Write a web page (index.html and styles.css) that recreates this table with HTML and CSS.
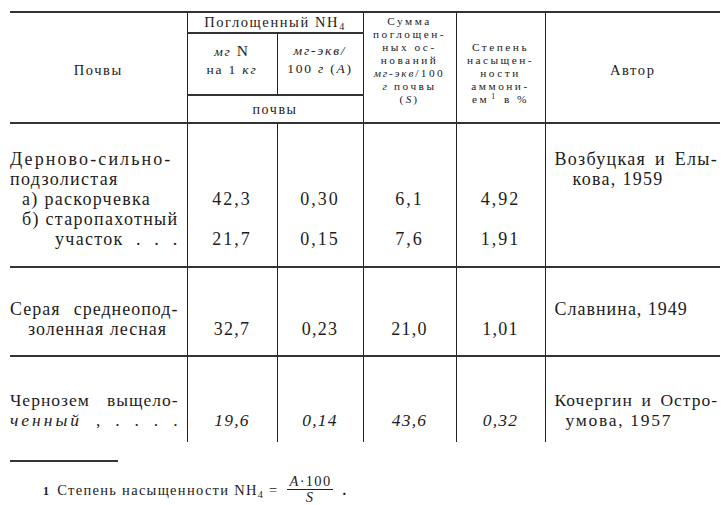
FILE: index.html
```html
<!DOCTYPE html>
<html lang="ru">
<head>
<meta charset="utf-8">
<title>Поглощенный аммоний</title>
<link rel="stylesheet" href="styles.css">
</head>
<body>
<div class="page">
  <table class="data">
    <colgroup>
      <col class="w1"><col class="w2"><col class="w3"><col class="w4"><col class="w5"><col class="w6">
    </colgroup>
    <thead>
      <tr class="h1">
        <th rowspan="3" class="first soil">Почвы</th>
        <th colspan="2" class="nh4">Поглощенный NH<sub>4</sub></th>
        <th rowspan="3" class="sum">Сумма<br>поглощен-<br>ных ос-<br>нований<br><i>мг-экв</i>/100<br><i>г</i> почвы<br>(<i>S</i>)</th>
        <th rowspan="3" class="deg">Степень<br>насыщен-<br>ности<br>аммони-<br>ем<sup>1</sup> в %</th>
        <th rowspan="3" class="author">Автор</th>
      </tr>
      <tr class="h2">
        <th class="unit"><i>мг</i> <span class="big">N</span><br>на 1 <i>кг</i></th>
        <th class="unit"><i>мг-экв/</i><br>100 <i>г</i> (<i>A</i>)</th>
      </tr>
      <tr class="h3">
        <th colspan="2" class="per">почвы</th>
      </tr>
    </thead>
    <tbody>
      <tr class="r1">
        <td class="first soiltxt">
          <div class="wide">Дерново-сильно-</div>
          <div>подзолистая</div>
          <div class="ind1">а) раскорчевка</div>
          <div class="ind1">б) старопахотный</div>
          <div class="ind2 j">участок . . .</div>
        </td>
        <td class="num"><br><br>42,3<br><br>21,7</td>
        <td class="num"><br><br>0,30<br><br>0,15</td>
        <td class="num"><br><br>6,1<br><br>7,6</td>
        <td class="num"><br><br>4,92<br><br>1,91</td>
        <td class="auth">
          <div class="j">Возбуцкая и Елы-</div>
          <div class="ind3">кова, 1959</div>
        </td>
      </tr>
      <tr class="r2">
        <td class="first soiltxt cond">
          <div class="j">Серая среднеопод-</div>
          <div class="ind4">золенная лесная</div>
        </td>
        <td class="num cond"><br>32,7</td>
        <td class="num cond"><br>0,23</td>
        <td class="num cond"><br>21,0</td>
        <td class="num cond"><br>1,01</td>
        <td class="auth cond">
          <div>Славнина, 1949</div>
        </td>
      </tr>
      <tr class="r3">
        <td class="first soiltxt cond">
          <div class="j">Чернозем выщело-</div>
          <div class="j"><i class="itw">ченный</i> , . . . .</div>
        </td>
        <td class="num cond"><br><i>19,6</i></td>
        <td class="num cond"><br><i>0,14</i></td>
        <td class="num cond"><br><i>43,6</i></td>
        <td class="num cond"><br><i>0,32</i></td>
        <td class="auth cond">
          <div class="j">Кочергин и Остро-</div>
          <div class="ind5">умова, 1957</div>
        </td>
      </tr>
    </tbody>
  </table>

  <div class="rule"></div>
  <p class="note"><span class="mark">1</span> Степень насыщенности NH<sub>4</sub> = <span class="frac"><span class="numer"><i>A</i>·100</span><span class="denom"><i>S</i></span></span> <span class="dot">.</span></p>
</div>
</body>
</html>
```

FILE: styles.css
```css
html, body {
  margin: 0;
  padding: 0;
  background: #ffffff;
}

body {
  color: #1c1c1c;
  font-family: "Liberation Serif", "Times New Roman", serif;
}

.page {
  padding: 11px 5px 0 10px;
}

table.data {
  border-collapse: collapse;
  table-layout: fixed;
  width: 710px;
}

col.w1 { width: 177px; }
col.w2 { width: 90px; }
col.w3 { width: 86px; }
col.w4 { width: 93px; }
col.w5 { width: 89px; }
col.w6 { width: 175px; }

th, td {
  padding: 0;
  border-left: 1px solid #222;
}

th.first, td.first {
  border-left: none;
}

/* header */
thead th {
  font-weight: normal;
  font-size: 13px;
  letter-spacing: 1.4px;
  line-height: 15px;
  text-align: center;
  vertical-align: middle;
}

tr.h1 th {
  border-top: 2px solid #333;
}

tr.h1 { height: 21px; }
tr.h2 { height: 62px; }
tr.h3 { height: 28px; }

th.nh4 {
  border-bottom: 2px solid #333;
  font-size: 14.5px;
  letter-spacing: 1.6px;
}

th.unit {
  font-size: 13.5px;
  letter-spacing: 1.8px;
  line-height: 18px;
  padding-bottom: 8px;
}

tr.h3 th {
  border-top: 2px solid #333;
  font-size: 14px;
  letter-spacing: 1.6px;
}

th.soil, th.author {
  font-size: 14.5px;
  letter-spacing: 1.6px;
  padding-top: 6px;
}

th.sum, th.deg {
  vertical-align: bottom;
  padding-bottom: 16px;
  font-size: 11.3px;
  letter-spacing: 2.5px;
  line-height: 13px;
}

th.sum i {
  letter-spacing: 1.8px;
}

.big {
  font-size: 15.5px;
}

sub {
  font-size: 70%;
  vertical-align: -3px;
  line-height: 0;
}

sup {
  font-size: 70%;
  vertical-align: 4px;
  line-height: 0;
  margin: 0 1px 0 2px;
}

/* body rows */
tbody td {
  vertical-align: top;
  font-size: 18px;
  line-height: 20px;
  letter-spacing: 1.3px;
}

tr.r1 td {
  border-top: 2px solid #333;
  padding-top: 25px;
}

tr.r2 td {
  border-top: 2px solid #333;
  padding-top: 31px;
}

tr.r3 td {
  border-top: 2px solid #333;
  padding-top: 33px;
}

tr.r1 { height: 144px; }
tr.r2 { height: 89px; }
tr.r3 { height: 86px; }

td.soiltxt {
  padding-right: 8px;
}

td.num {
  text-align: center;
  letter-spacing: 2px;
}

td.auth {
  padding-left: 9px;
  padding-right: 2px;
}

td.cond {
  letter-spacing: 1px;
}

td.num.cond {
  letter-spacing: 1.2px;
}

tr.r3 td.cond {
  font-size: 17.5px;
  line-height: 20px;
}

.wide {
  letter-spacing: 2.1px;
  white-space: nowrap;
}

.itw {
  letter-spacing: 3px;
}

.j {
  text-align: justify;
  text-align-last: justify;
}

.ind1 { padding-left: 12px; }
.ind2 { padding-left: 45px; }
.ind3 { padding-left: 18px; }
.ind4 { padding-left: 18px; }
.ind5 { padding-left: 11px; letter-spacing: 1.7px; }

/* footnote */
.rule {
  width: 108px;
  height: 0;
  border-top: 2px solid #333;
  margin-top: 18px;
}

.note {
  margin: 15px 0 0 33px;
  font-size: 14.5px;
  letter-spacing: 1.3px;
  line-height: 20px;
  white-space: nowrap;
}

.mark {
  font-weight: bold;
  font-size: 12px;
  margin-right: 2px;
}

.frac {
  display: inline-block;
  vertical-align: middle;
  text-align: center;
  margin-left: 3px;
  position: relative;
  top: -3px;
}

.numer {
  display: block;
  line-height: 14px;
  padding: 0 2px 1px 3px;
  border-bottom: 1px solid #222;
}

.denom {
  display: block;
  line-height: 14px;
}

.dot {
  margin-left: 4px;
  font-weight: bold;
}
```
